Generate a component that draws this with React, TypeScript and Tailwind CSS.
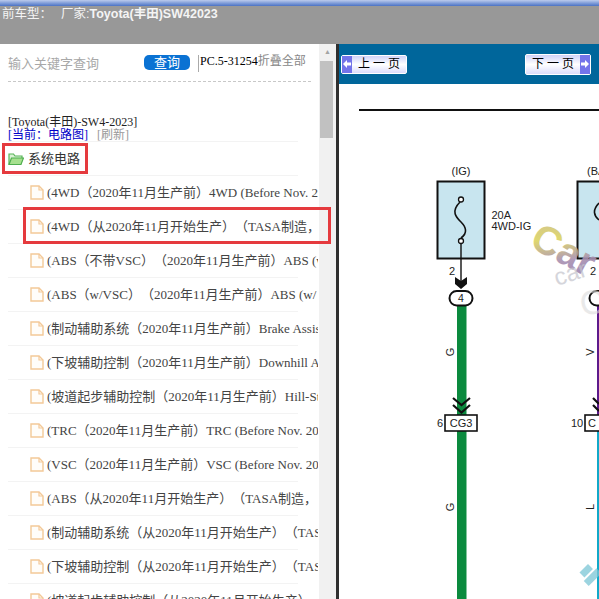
const TREE_ITEMS = [
  { label: "(4WD（2020年11月生产前）4WD (Before Nov. 2020 Production)" },
  { label: "(4WD（从2020年11月开始生产）（TASA制造，", marked: true },
  { label: "(ABS（不带VSC）（2020年11月生产前）ABS (w/o VSC)" },
  { label: "(ABS（w/VSC）（2020年11月生产前）ABS (w/ VSC)" },
  { label: "(制动辅助系统（2020年11月生产前）Brake Assist System" },
  { label: "(下坡辅助控制（2020年11月生产前）Downhill Assist Control" },
  { label: "(坡道起步辅助控制（2020年11月生产前）Hill-Start Assist" },
  { label: "(TRC（2020年11月生产前）TRC (Before Nov. 2020 Production)" },
  { label: "(VSC（2020年11月生产前）VSC (Before Nov. 2020 Production)" },
  { label: "(ABS（从2020年11月开始生产）（TASA制造，" },
  { label: "(制动辅助系统（从2020年11月开始生产）（TASA制造" },
  { label: "(下坡辅助控制（从2020年11月开始生产）（TASA制造" },
  { label: "(坡道起步辅助控制（从2020年11月开始生产）" },
];

function FolderIcon() {
  return (
    <svg width="16" height="14" viewBox="0 0 16 14" className="shrink-0">
      <path d="M1 12.5V2h4.5l1.5 2h7v2" fill="#d9f2d4" stroke="#58b558" strokeWidth="1.2" />
      <path d="M1 12.5 3.5 6H15.5L13 12.5Z" fill="#a6e08f" stroke="#4fae4f" strokeWidth="1.2" />
    </svg>
  );
}

function FileIcon() {
  return (
    <svg width="14" height="15" viewBox="0 0 14 15" className="shrink-0">
      <path d="M1 1H9L13 5V14H1Z" fill="#fffdf9" stroke="#f3c998" strokeWidth="1.4" />
      <path d="M9 1V5H13" fill="none" stroke="#f3c998" strokeWidth="1.2" />
    </svg>
  );
}

function PageButton({ dir, className }: { dir: "prev" | "next"; className: string }) {
  const arrow = (
    <span className="flex h-full w-[10px] items-center justify-center bg-[#7474ea]">
      <svg width="8" height="8" viewBox="0 0 8 8" className={dir === "next" ? "rotate-180" : ""}>
        <path d="M0 4 4 0V2.4H8V5.6H4V8Z" fill="#fff" />
      </svg>
    </span>
  );
  return (
    <div
      className={`flex w-[66px] items-center rounded-[2px] border border-white bg-gradient-to-b from-[#d0d2f8] via-[#ffffff] to-[#dcdcfb] ${className}`}
    >
      {dir === "prev" && arrow}
      <span className="flex-1 text-center text-[12px] leading-none text-black">
        {dir === "prev" ? "上 一 页" : "下 一 页"}
      </span>
      {dir === "next" && arrow}
    </div>
  );
}

function WiringDiagram() {
  return (
    <svg viewBox="339 84 260 515" className="h-[515px] w-[260px]" fontFamily="'Liberation Sans', sans-serif">
      <defs>
        <linearGradient id="mark" x1="0" y1="0" x2="1" y2="1">
          <stop offset="0" stopColor="#c8b890" />
          <stop offset="0.35" stopColor="#dcd460" />
          <stop offset="0.65" stopColor="#a890b0" />
          <stop offset="1" stopColor="#9078b0" />
        </linearGradient>
      </defs>
      <rect x="359" y="109" width="240" height="2" fill="#111" />

      {/* left fuse */}
      <text x="461" y="175" fontSize="11" textAnchor="middle" fill="#222">(IG)</text>
      <rect x="437.5" y="181.5" width="47" height="77" fill="#c8e5ef" stroke="#111" strokeWidth="2" />
      <circle cx="461" cy="199.5" r="2.5" fill="#fff" stroke="#111" strokeWidth="1.3" />
      <circle cx="461" cy="241" r="2.5" fill="#fff" stroke="#111" strokeWidth="1.3" />
      <path d="M460 202C450 212 457 218 461 222C466 227 468 233 461 238" fill="none" stroke="#111" strokeWidth="1.6" />
      <text x="491.5" y="219" fontSize="11" fill="#222">20A</text>
      <text x="491.5" y="230" fontSize="11" fill="#222">4WD-IG</text>
      <path d="M461 243V282" stroke="#111" strokeWidth="1.4" />
      <path d="M455 277L461 281L467 277V284L461 289L455 284Z" fill="#111" />
      <text x="449" y="275" fontSize="11" fill="#222">2</text>

      <rect x="457" y="306" width="9.5" height="293" fill="#0b8a3e" />
      <rect x="449.5" y="291" width="23" height="14.5" rx="7.2" fill="#fff" stroke="#111" strokeWidth="2" />
      <text x="461" y="302" fontSize="10.5" textAnchor="middle" fill="#222">4</text>
      <text x="0" y="0" fontSize="11" textAnchor="middle" fill="#222" transform="translate(454 352) rotate(-90)">G</text>
      <path d="M453 398L461.5 405L470 398M453 405L461.5 412.5L470 405" fill="none" stroke="#111" strokeWidth="2.2" />
      <rect x="445" y="415" width="32" height="16" fill="#fff" stroke="#111" strokeWidth="1.6" />
      <text x="461" y="427" fontSize="11" textAnchor="middle" fill="#222">CG3</text>
      <text x="437" y="427" fontSize="11" fill="#222">6</text>
      <text x="0" y="0" fontSize="11" textAnchor="middle" fill="#222" transform="translate(454 507) rotate(-90)">G</text>

      {/* right fuse, cut off by the pane */}
      <text x="587" y="175" fontSize="11" fill="#222">(BA</text>
      <rect x="577.5" y="181.5" width="40" height="77" fill="#c8e5ef" stroke="#111" strokeWidth="2" />
      <path d="M599 203C592 210 594 216 599 220" fill="none" stroke="#111" strokeWidth="1.6" />
      <text x="590" y="275" fontSize="11" fill="#222">2</text>
      <rect x="597" y="306" width="4" height="110" fill="#5c1a8c" />
      <rect x="597" y="431" width="4" height="168" fill="#11a9c9" />
      <rect x="589.5" y="291" width="23" height="14.5" rx="7.2" fill="#fff" stroke="#111" strokeWidth="2" />
      <text x="0" y="0" fontSize="11" textAnchor="middle" fill="#222" transform="translate(594 352) rotate(-90)">V</text>
      <path d="M593 398L599 404M593 405L599 411" fill="none" stroke="#111" strokeWidth="2.2" />
      <rect x="585" y="415" width="32" height="16" fill="#fff" stroke="#111" strokeWidth="1.6" />
      <text x="588" y="427" fontSize="11" fill="#222">C</text>
      <text x="571" y="427" fontSize="11" fill="#222">10</text>
      <text x="0" y="0" fontSize="11" textAnchor="middle" fill="#222" transform="translate(594 507) rotate(-90)">L</text>

      {/* watermark */}
      <text x="0" y="0" fontSize="40" fontWeight="700" fill="url(#mark)" opacity="0.9" transform="translate(528 246) rotate(28)">Car</text>
      <text x="0" y="0" fontSize="24" fill="#c4c4cc" opacity="0.7" transform="translate(557 286) rotate(-18)">car</text>
      <text x="0" y="0" fontSize="34" fill="#dcdcdc" opacity="0.6" transform="translate(582 316) rotate(-10)">C</text>
      <g fill="#7cc6d6" opacity="0.75" transform="translate(588 564) rotate(45)">
        <rect x="0" y="0" width="7" height="12" />
        <rect x="9" y="-3" width="7" height="18" />
      </g>
    </svg>
  );
}

export default function App() {
  return (
    <div className="flex h-[599px] w-[599px] flex-col overflow-hidden bg-white [font-family:'Liberation_Serif','Noto_Sans_CJK_SC',serif] [text-spacing-trim:space-all]">
      <header className="h-[44px] shrink-0 bg-[#989898]">
        <div className="h-[6px] bg-gradient-to-b from-[#bccbec] to-[#4b72c4]" />
        <p className="whitespace-nowrap pl-[2px] text-[12.5px] leading-[16px] text-[#f4f4f4] [font-family:'Liberation_Sans','Noto_Sans_CJK_SC',sans-serif]">
          前车型：<span className="ml-[9px]">厂家:</span>
          <b>Toyota(丰田)SW42023</b>
        </p>
      </header>

      <div className="flex min-h-0 flex-1">
        <aside className="relative z-10 w-[319px] shrink-0">
          <div className="mx-[8px] flex h-[38px] items-start border-b border-dashed border-[#c8c8c8] pt-[11px]">
            <span className="mt-[1px] w-[136px] text-[13px] leading-[16px] text-[#a8a8a8]">输入关键字查询</span>
            <span className="flex h-[15px] w-[46px] items-center justify-center rounded-[5px] bg-[#0a72d3] text-[13px] text-white">
              查询
            </span>
            <span className="ml-[8px] h-[17px] whitespace-nowrap border-l border-[#aaa] pl-[1px] text-[12px] leading-[12px] text-black">
              PC.5-31254<span className="text-[#888]">折叠全部</span>
            </span>
          </div>

          <div className="px-[8px] pt-[34px] text-[12px] leading-[12px]">
            <p className="text-[#222]">[Toyota(丰田)-SW4-2023]</p>
            <p className="mt-[1px]">
              <span className="text-[#0000c8]">[当前：电路图]</span>
              <span className="ml-[9px] text-[#999]">[刷新]</span>
            </p>
          </div>

          <div className="relative mx-[8px] flex h-[35px] w-[290px] items-center gap-[4px] border-y border-[#f3f3f3]">
            <FolderIcon />
            <span className="text-[13px] text-[#333]">系统电路</span>
            <span className="absolute left-[-6px] top-[1px] h-[31px] w-[86px] border-[3px] border-[#e53a3e]" />
          </div>

          <ul>
            {TREE_ITEMS.map((item) => (
              <li key={item.label} className="relative h-[34px]">
                <div className="ml-[8px] flex h-full w-[290px] items-center border-b border-[#f3f3f3] pl-[22px]">
                  <FileIcon />
                  <span className="ml-[3px] w-[271px] shrink-0 overflow-hidden whitespace-nowrap text-[13px] text-[#444]">
                    {item.label}
                  </span>
                </div>
                {item.marked && (
                  <span className="absolute left-[23px] top-[-3px] h-[37px] w-[308px] border-[3px] border-[#e53a3e]" />
                )}
              </li>
            ))}
          </ul>
        </aside>

        <div className="flex w-[17px] shrink-0 flex-col bg-[#f1f1f1]">
          <span className="flex h-[17px] items-center justify-center text-[7px] leading-none text-[#a3a3a3]">▲</span>
          <span className="ml-[1px] h-[77px] w-[13px] bg-[#c1c1c1]" />
        </div>

        <div className="w-[3px] shrink-0 bg-[#2f2f2f]" />

        <main className="flex min-w-0 flex-1 flex-col">
          <div className="relative flex h-[40px] shrink-0 items-center justify-between bg-[#00669b] pl-[2px] pr-[8px]">
            <PageButton dir="prev" className="h-[19px]" />
            <PageButton dir="next" className="h-[21px]" />
          </div>
          <WiringDiagram />
        </main>
      </div>
    </div>
  );
}
